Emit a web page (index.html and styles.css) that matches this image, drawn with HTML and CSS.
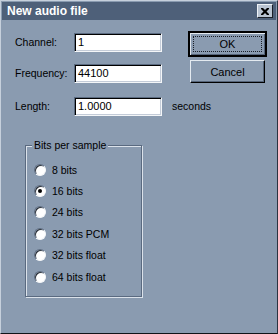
FILE: index.html
```html
<!DOCTYPE html>
<html>
<head>
<meta charset="utf-8">
<link rel="stylesheet" href="styles.css">
</head>
<body>
<div class="window">
  <div class="titlebar">
    <span class="title">New audio file</span>
    <span class="close"><svg width="8" height="7" viewBox="0 0 8 7"><path d="M0 0h2l2 2 2-2h2v1l-2.5 2.5L8 6v1H6L4 5 2 7H0V6l2.5-2.5L0 1z" fill="#000"/></svg></span>
  </div>
  <div class="content">
    <div class="form">
      <span class="label l1">Channel:</span>
      <div class="input i1">1</div>
      <span class="label l2">Frequency:</span>
      <div class="input i2">44100</div>
      <span class="label l3">Length:</span>
      <div class="input i3">1.0000</div>
      <span class="unit">seconds</span>
      <div class="buttons">
        <div class="btn default"><span class="focus">OK</span></div>
        <div class="btn">Cancel</div>
      </div>
    </div>
    <div class="group">
      <div class="group-title">Bits per sample</div>
      <ul class="radios">
        <li class="opt"><span class="radio"></span>8 bits</li>
        <li class="opt"><span class="radio checked"></span>16 bits</li>
        <li class="opt"><span class="radio"></span>24 bits</li>
        <li class="opt"><span class="radio"></span>32 bits PCM</li>
        <li class="opt"><span class="radio"></span>32 bits float</li>
        <li class="opt"><span class="radio"></span>64 bits float</li>
      </ul>
    </div>
  </div>
</div>
</body>
</html>
```

FILE: styles.css
```css
html, body {
  margin: 0;
  padding: 0;
  background: #8a9bb0;
}
.window {
  width: 278px;
  height: 334px;
  box-sizing: border-box;
  background: #8a9bb0;
  border-left: 1px solid #c6d0dc;
  border-top: 1px solid #c6d0dc;
  border-right: 1px solid #2a3340;
  border-bottom: 1px solid #101418;
  font-family: "Liberation Sans", Arial, sans-serif;
  font-size: 10.5px;
  color: #000;
  display: flex;
  flex-direction: column;
}
.titlebar {
  height: 18px;
  margin: 1px 1px 0 1px;
  background: #4e6079;
  display: flex;
  align-items: center;
  justify-content: space-between;
  padding: 0 3px 0 5px;
}
.title {
  font-weight: bold;
  font-size: 12px;
  color: #fff;
}
.close {
  width: 16px;
  height: 14px;
  box-sizing: border-box;
  background: #b9c4d2;
  border: 1px solid;
  border-color: #eef2f6 #1a1f28 #1a1f28 #eef2f6;
  display: flex;
  align-items: center;
  justify-content: center;
}
.content {
  padding: 13px 0 0 14px;
}
.form {
  display: grid;
  grid-template-columns: 59px 88px 26px 79px;
  grid-template-rows: 31px 33px 19px;
  align-items: start;
}
.label {
  grid-column: 1;
  line-height: 19px;
}
.l1 { grid-row: 1; }
.l2 { grid-row: 2; }
.l3 { grid-row: 3; }
.input {
  grid-column: 2;
  height: 19px;
  box-sizing: border-box;
  background: #fff;
  border: 1px solid;
  border-color: #5a6a80 #f4f6f8 #f4f6f8 #5a6a80;
  box-shadow: inset 1px 1px 0 #000, inset -1px -1px 0 #c4ccd8;
  padding-left: 3px;
  line-height: 17px;
  font-size: 11px;
}
.i1 { grid-row: 1; }
.i2 { grid-row: 2; }
.i3 { grid-row: 3; }
.unit {
  grid-column: 3 / 5;
  grid-row: 3;
  padding-left: 10px;
  line-height: 19px;
}
.buttons {
  grid-column: 4;
  grid-row: 1 / 3;
  margin-top: -1px;
  display: flex;
  flex-direction: column;
  gap: 4px;
  align-items: center;
}
.btn {
  width: 75px;
  height: 23px;
  box-sizing: border-box;
  border: 1px solid;
  border-color: #e4eaf0 #000 #000 #e4eaf0;
  box-shadow: inset -1px -1px 0 #56657a;
  display: flex;
  align-items: center;
  justify-content: center;
  font-size: 11px;
}
.btn.default {
  width: 77px;
  height: 24px;
  outline: 1px solid #000;
  outline-offset: 0;
  border-color: #000;
  box-shadow: inset 1px 1px 0 #e4eaf0, inset -1px -1px 0 #56657a;
  padding: 3px;
}
.focus {
  flex: 1;
  align-self: stretch;
  display: flex;
  align-items: center;
  justify-content: center;
  border: 1px dotted #1a1f28;
}
.group {
  margin: 29px 0 0 10px;
  width: 117px;
  height: 152px;
  box-sizing: border-box;
  border: 1px solid #5a6a80;
  box-shadow: 1px 1px 0 #dbe2ea, inset 1px 1px 0 #dbe2ea;
}
.group-title {
  width: fit-content;
  margin: -7px 0 0 6px;
  padding: 0 2px;
  background: #8a9bb0;
  line-height: 13px;
}
.radios {
  list-style: none;
  margin: 7px 0 0 8px;
  padding: 0;
}
.opt {
  height: 21.4px;
  display: flex;
  align-items: center;
}
.radio {
  width: 12px;
  height: 12px;
  box-sizing: border-box;
  border-radius: 50%;
  background: #fff;
  border: 1px solid;
  border-color: #5a6a80 #f4f6f8 #f4f6f8 #5a6a80;
  box-shadow: inset 1px 1px 0 #2a3038;
  margin-right: 6px;
  display: flex;
  align-items: center;
  justify-content: center;
}
.radio.checked::after {
  content: "";
  width: 4px;
  height: 4px;
  border-radius: 50%;
  background: #000;
}
```
